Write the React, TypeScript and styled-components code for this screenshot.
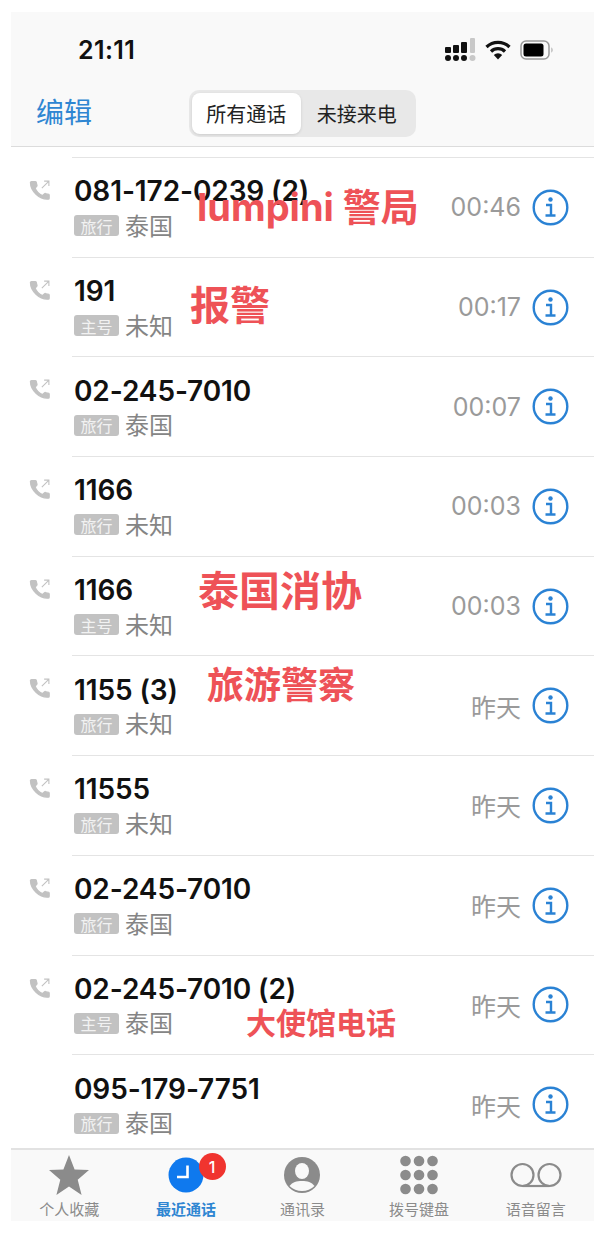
import styled, { createGlobalStyle } from "styled-components";

const GlobalStyle = createGlobalStyle`
  html, body { margin: 0; padding: 0; background: #fff; }
  body { font-family: Inter, "Noto Sans CJK SC", sans-serif; }
`;

const CJK = `Inter, "Noto Sans CJK SC", sans-serif`;

const Screen = styled.div`
  width: 583px;
  height: 1209px;
  margin: 12px 0 0 11px;
  display: flex;
  flex-direction: column;
  background: #fff;
  overflow: hidden;
`;
const Header = styled.header`
  height: 135px;
  flex: none;
  background: #f9f9f9;
  border-bottom: 1px solid #dcdcdc;
  box-sizing: border-box;
  display: flex;
  flex-direction: column;
`;
const StatusBar = styled.div`
  height: 76px;
  display: flex;
  align-items: center;
  justify-content: space-between;
  padding: 0 40px 0 67px;
`;
const Time = styled.span`
  font-size: 25px;
  font-weight: 600;
  letter-spacing: 0.4px;
  color: #111;
`;
const StatusIcons = styled.div`
  display: flex;
  align-items: center;
  gap: 9px;
`;
const NavBar = styled.div`
  position: relative;
  display: flex;
  align-items: flex-start;
  padding-left: 25px;
`;
const EditLink = styled.span`
  font-family: ${CJK};
  font-size: 28px;
  line-height: 50px;
  color: #2f86d2;
`;
const Segments = styled.div`
  margin-left: 97px;
  margin-top: 2px;
  width: 227px;
  height: 47px;
  box-sizing: border-box;
  padding: 3px;
  display: flex;
  border-radius: 10px;
  background: #e8e8e8;
`;
const Segment = styled.span<{ $active?: boolean }>`
  width: ${(p) => (p.$active ? "110px" : "114px")};
  display: flex;
  align-items: center;
  justify-content: center;
  font-family: ${CJK};
  font-size: 20px;
  color: #222;
  border-radius: 8px;
  background: ${(p) => (p.$active ? "#fff" : "transparent")};
  box-shadow: ${(p) => (p.$active ? "0 1px 3px rgba(0,0,0,.12)" : "none")};
`;
const List = styled.div`
  flex: 1;
  min-height: 0;
  overflow: hidden;
  padding-top: 10px;
`;
const Row = styled.div`
  position: relative;
  height: 99.7px;
  display: flex;
`;
const CallCell = styled.div`
  width: 61px;
  flex: none;
  padding: 21px 0 0 18px;
  box-sizing: border-box;
`;
const RowBody = styled.div`
  flex: 1;
  display: flex;
  align-items: center;
  justify-content: space-between;
  box-sizing: border-box;
  border-top: 1px solid #e4e4e4;
  padding: 0 25px 0 2px;
`;
const Info = styled.div`
  display: flex;
  flex-direction: column;
`;
const Number = styled.div`
  font-size: 28px;
  font-weight: 600;
  letter-spacing: -0.1px;
  line-height: 34px;
  color: #111;
`;
const Sub = styled.div`
  display: flex;
  align-items: center;
  gap: 6px;
  height: 32px;
`;
const Tag = styled.span`
  width: 45px;
  height: 21px;
  margin-top: 3px;
  display: flex;
  align-items: center;
  justify-content: center;
  border-radius: 3px;
  background: #c2c2c2;
  color: #f2f2f2;
  font-family: ${CJK};
  font-size: 16px;
`;
const Place = styled.span`
  font-family: ${CJK};
  font-size: 24px;
  color: #858585;
`;
const Meta = styled.div`
  display: flex;
  align-items: center;
  gap: 11px;
`;
const When = styled.span`
  font-family: ${CJK};
  font-size: 25px;
  color: #9a9a9a;
`;
const Note = styled.span<{ $left: number; $top: number; $size: number }>`
  position: absolute;
  left: ${(p) => p.$left}px;
  top: ${(p) => p.$top}px;
  font-family: ${CJK};
  font-size: ${(p) => p.$size}px;
  line-height: 1.2;
  font-weight: 700;
  white-space: nowrap;
  color: #ee5257;
`;
const TabBar = styled.nav`
  height: 73px;
  flex: none;
  display: flex;
  box-sizing: border-box;
  background: #f9f9f9;
  border-top: 2px solid #e2e2e2;
`;
const Tab = styled.div<{ $active?: boolean }>`
  position: relative;
  flex: 1;
  display: flex;
  flex-direction: column;
  align-items: center;
  font-family: ${CJK};
  font-size: 15px;
  line-height: 20px;
  font-weight: ${(p) => (p.$active ? 700 : 400)};
  color: ${(p) => (p.$active ? "#2f86d2" : "#8b8b8b")};
`;
const TabIcon = styled.div`
  height: 50px;
  display: flex;
  align-items: center;
  justify-content: center;
`;
const Badge = styled.span`
  position: absolute;
  left: 71px;
  top: 3px;
  width: 27px;
  height: 27px;
  border-radius: 50%;
  background: #f0342f;
  color: #fff;
  display: flex;
  align-items: center;
  justify-content: center;
  font-family: Inter, sans-serif;
  font-size: 16px;
  font-weight: 500;
`;

const calls = [
  { num: "081-172-0239 (2)", tag: "旅行", place: "泰国", when: "00:46", note: { text: "lumpini 警局", left: 186, top: 28, size: 38 } },
  { num: "191", tag: "主号", place: "未知", when: "00:17", note: { text: "报警", left: 179, top: 25, size: 40 } },
  { num: "02-245-7010", tag: "旅行", place: "泰国", when: "00:07" },
  { num: "1166", tag: "旅行", place: "未知", when: "00:03" },
  { num: "1166", tag: "主号", place: "未知", when: "00:03", note: { text: "泰国消协", left: 187, top: 11, size: 41 } },
  { num: "1155 (3)", tag: "旅行", place: "未知", when: "昨天", note: { text: "旅游警察", left: 196, top: 9, size: 37 } },
  { num: "11555", tag: "旅行", place: "未知", when: "昨天" },
  { num: "02-245-7010", tag: "旅行", place: "泰国", when: "昨天" },
  { num: "02-245-7010 (2)", tag: "主号", place: "泰国", when: "昨天", note: { text: "大使馆电话", left: 235, top: 50, size: 30 } },
  { num: "095-179-7751", tag: "旅行", place: "泰国", when: "昨天", noIcon: true },
];

function CallIcon() {
  return (
    <svg width="22" height="24" viewBox="0 0 24 24">
      <path
        fill="#c2c2c2"
        stroke="#c2c2c2"
        strokeWidth="1.400"
        strokeLinejoin="round"
        d="M6.600 9.800c1.400 3.600 4.400 6.800 8 8.400l2.400-2.200c.3-.3.7-.4 1-.2 1 .4 2 .6 3 .7.600 0 1 .4 1 1v3.400c0 .6-.4 1.100-1 1.100C11.400 22.800 1.600 13 1.600 3.900c0-.6.5-1 1-1H7c.6 0 1 .4 1 1 .1 1 .3 2 .7 3 .1.3 0 .7-.2 1z"
      />
      <path fill="none" stroke="#c2c2c2" strokeWidth="1.200" d="M14 10 21.500 2.500M16.500 2.300h5.200v5.200" />
    </svg>
  );
}

function InfoIcon() {
  return (
    <svg width="37" height="37" viewBox="0 0 37 37">
      <circle cx="18.500" cy="18.500" r="16.800" fill="none" stroke="#2a82d4" strokeWidth="2.400" />
      <circle cx="18.500" cy="10.500" r="2.200" fill="#2a82d4" />
      <path fill="none" stroke="#2a82d4" strokeWidth="2.400" d="M14 16h5v10.500M13.500 26.500h10" />
    </svg>
  );
}

function SignalIcon() {
  return (
    <svg width="31" height="24" viewBox="0 0 31 24">
      <g fill="#111">
        <rect x="0" y="9" width="6" height="6" rx="1" />
        <rect x="8" y="7" width="6" height="8" rx="1" />
        <rect x="16" y="4" width="6" height="11" rx="1" />
        <circle cx="3" cy="20" r="3" />
        <circle cx="11" cy="20" r="3" />
        <circle cx="19" cy="20" r="3" />
      </g>
      <rect x="25" y="0" width="5" height="15" rx="1" fill="#c8c8c8" />
      <circle cx="27.500" cy="20" r="3" fill="#c8c8c8" />
    </svg>
  );
}

function WifiIcon() {
  return (
    <svg width="26" height="20" viewBox="0 0 26 20">
      <g fill="none" stroke="#111" strokeWidth="3.200">
        <path d="M1.500 7a16.500 16.500 0 0 1 23 0" />
        <path d="M6 11.500a10 10 0 0 1 14 0" />
      </g>
      <path fill="#111" d="M13 19.500 8.800 15a6 6 0 0 1 8.400 0z" />
    </svg>
  );
}

function BatteryIcon() {
  return (
    <svg width="34" height="20" viewBox="0 0 34 20">
      <rect x="1" y="1" width="28" height="18" rx="5" fill="none" stroke="#999" strokeWidth="1.500" />
      <rect x="3.500" y="3.500" width="20" height="13" rx="2.500" fill="#000" />
      <path d="M31.500 7.500c1.300.5 1.300 4.500 0 5z" fill="#999" />
    </svg>
  );
}

function StarIcon() {
  return (
    <svg width="40" height="42" viewBox="0 0 40 42">
      <path fill="#8b8b8b" d="M20 1l5.600 14.500 14.400.6-11.300 9.600 3.900 15.300L20 32.500 7.400 41l3.900-15.300L0 16.100l14.400-.6z" />
    </svg>
  );
}

function ClockIcon() {
  return (
    <svg width="36" height="42" viewBox="0 0 36 42">
      <circle cx="18" cy="21" r="17.500" fill="#0f79ee" />
      <path fill="none" stroke="#fff" strokeWidth="2.600" d="M19.500 11.500V23H9" />
    </svg>
  );
}

function ContactIcon() {
  return (
    <svg width="36" height="42" viewBox="0 0 36 42">
      <circle cx="18" cy="21" r="18" fill="#8b8b8b" />
      <ellipse cx="18" cy="17" rx="7" ry="8" fill="#f9f9f9" />
      <path fill="#f9f9f9" d="M5.500 32c3-4 7-5 12.500-5s9.500 1 12.500 5a18 18 0 0 1-25 0z" />
    </svg>
  );
}

function KeypadIcon() {
  const dots = [0, 1, 2].flatMap((r) => [0, 1, 2].map((c) => [c, r]));
  return (
    <svg width="38" height="42" viewBox="0 0 38 42">
      {dots.map(([c, r]) => (
        <circle key={`${c}-${r}`} cx={5.500 + c * 13.500} cy={7 + r * 14} r="5.300" fill="#8b8b8b" />
      ))}
    </svg>
  );
}

function VoicemailIcon() {
  return (
    <svg width="52" height="28" viewBox="0 0 52 28">
      <g fill="none" stroke="#8b8b8b" strokeWidth="2.200">
        <circle cx="12.500" cy="14" r="11" />
        <circle cx="39.500" cy="14" r="11" />
        <path d="M12.500 25h27" />
      </g>
    </svg>
  );
}

export default function App() {
  return (
    <>
      <GlobalStyle />
      <Screen>
        <Header>
          <StatusBar>
            <Time>21:11</Time>
            <StatusIcons>
              <SignalIcon />
              <WifiIcon />
              <BatteryIcon />
            </StatusIcons>
          </StatusBar>
          <NavBar>
            <EditLink>编辑</EditLink>
            <Segments>
              <Segment $active>所有通话</Segment>
              <Segment>未接来电</Segment>
            </Segments>
          </NavBar>
        </Header>
        <List>
          {calls.map((c, i) => (
            <Row key={i}>
              <CallCell>{!c.noIcon && <CallIcon />}</CallCell>
              <RowBody>
                <Info>
                  <Number>{c.num}</Number>
                  <Sub>
                    <Tag>{c.tag}</Tag>
                    <Place>{c.place}</Place>
                  </Sub>
                </Info>
                <Meta>
                  <When>{c.when}</When>
                  <InfoIcon />
                </Meta>
              </RowBody>
              {c.note && (
                <Note $left={c.note.left} $top={c.note.top} $size={c.note.size}>
                  {c.note.text}
                </Note>
              )}
            </Row>
          ))}
        </List>
        <TabBar>
          <Tab>
            <TabIcon><StarIcon /></TabIcon>
            个人收藏
          </Tab>
          <Tab $active>
            <TabIcon><ClockIcon /></TabIcon>
            <Badge>1</Badge>
            最近通话
          </Tab>
          <Tab>
            <TabIcon><ContactIcon /></TabIcon>
            通讯录
          </Tab>
          <Tab>
            <TabIcon><KeypadIcon /></TabIcon>
            拨号键盘
          </Tab>
          <Tab>
            <TabIcon><VoicemailIcon /></TabIcon>
            语音留言
          </Tab>
        </TabBar>
      </Screen>
    </>
  );
}
